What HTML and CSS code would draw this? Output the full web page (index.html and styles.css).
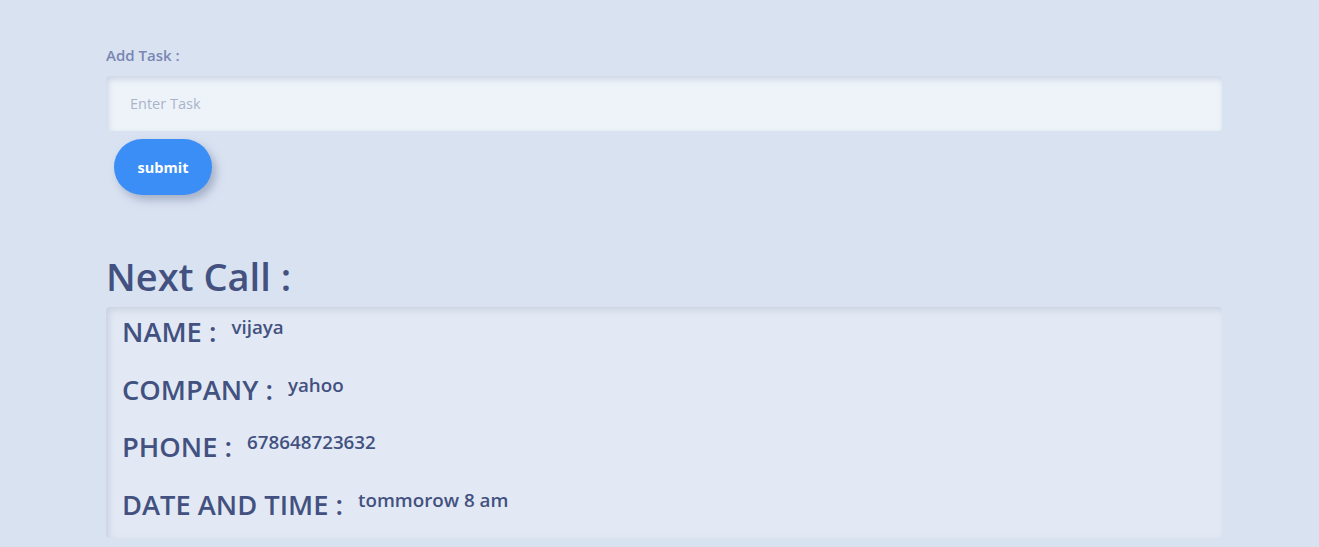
FILE: index.html
```html
<!DOCTYPE html>
<html>
<head>
<meta charset="utf-8">
<link rel="stylesheet" href="styles.css">
</head>
<body>
<main class="page">
  <form class="task-form">
    <label class="task-label" for="task">Add Task :</label>
    <input class="task-input" id="task" type="text" placeholder="Enter Task">
    <button class="submit-btn" type="button">submit</button>
  </form>
  <section class="next-call">
    <h1 class="next-title">Next Call :</h1>
    <div class="call-card">
      <div class="call-row"><span class="call-key">NAME :</span><span class="call-val">vijaya</span></div>
      <div class="call-row"><span class="call-key">COMPANY :</span><span class="call-val">yahoo</span></div>
      <div class="call-row"><span class="call-key">PHONE :</span><span class="call-val">678648723632</span></div>
      <div class="call-row"><span class="call-key">DATE AND TIME :</span><span class="call-val">tommorow 8 am</span></div>
    </div>
  </section>
</main>
</body>
</html>
```

FILE: styles.css
```css
html, body {
  margin: 0;
  padding: 0;
  background: #d9e2f1;
}
body {
  font-family: "Open Sans", "Noto Sans", sans-serif;
  color: #435180;
}
.page {
  width: 1116px;
  margin: 0 auto 0 106px;
  padding-top: 44px;
}
.task-form {
  display: flex;
  flex-direction: column;
  align-items: flex-start;
}
.task-label {
  font-size: 15px;
  font-weight: 600;
  color: #7a86b3;
  line-height: 22px;
  margin-bottom: 10px;
}
.task-input {
  box-sizing: border-box;
  width: 100%;
  height: 55px;
  border: none;
  outline: none;
  border-radius: 4px;
  background: #eef3f9;
  box-shadow: inset 2px 3px 6px rgba(160, 175, 205, 0.45);
  padding: 0 24px;
  font-family: inherit;
  font-size: 14.5px;
  color: #435180;
}
.task-input::placeholder {
  color: #a9b4cc;
}
.submit-btn {
  margin: 8px 0 0 8px;
  width: 98px;
  height: 56px;
  border: none;
  border-radius: 28px;
  background: #3a8ef6;
  color: #ffffff;
  font-family: inherit;
  font-size: 14.5px;
  font-weight: 700;
  box-shadow: 4px 5px 8px rgba(120, 135, 165, 0.55);
}
.next-call {
  margin-top: 58px;
}
.next-title {
  margin: 0;
  font-size: 38px;
  font-weight: 600;
  line-height: 46px;
  color: #435180;
}
.call-card {
  margin-top: 8px;
  background: #e2e9f4;
  border-radius: 4px;
  box-shadow: inset 3px 3px 6px rgba(170, 182, 205, 0.45);
  padding: 6px 16px 14px;
  display: flex;
  flex-direction: column;
  gap: 19.5px;
}
.call-row {
  display: flex;
  align-items: flex-start;
  gap: 15px;
}
.call-key {
  font-size: 27.3px;
  font-weight: 600;
  line-height: 38px;
}
.call-val {
  font-size: 18.8px;
  font-weight: 600;
  line-height: 28px;
}
```
